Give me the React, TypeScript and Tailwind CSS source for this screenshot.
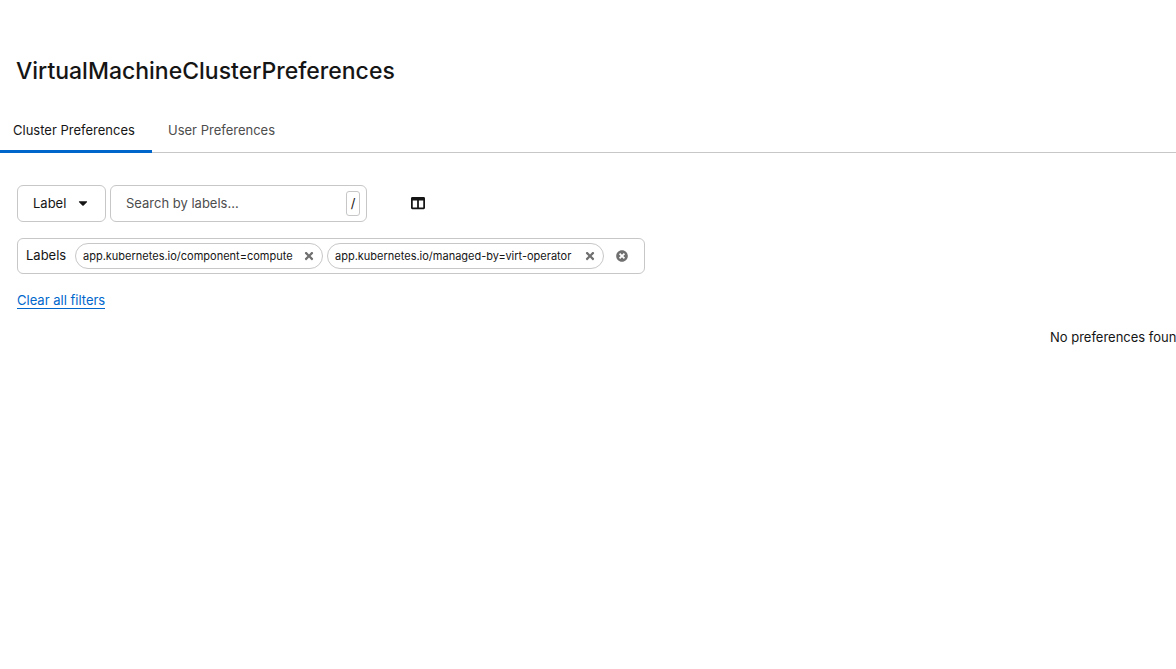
import { useState } from "react";
import { FaCaretDown, FaColumns, FaTimes, FaTimesCircle } from "react-icons/fa";

const tabs = [
  { name: "Cluster Preferences", className: "w-[152px] pl-[13px]" },
  { name: "User Preferences", className: "pl-4 pr-4" },
];

const initialLabels = [
  { text: "app.kubernetes.io/component=compute", className: "w-[248px]" },
  { text: "app.kubernetes.io/managed-by=virt-operator", className: "w-[277px]" },
];

export default function App() {
  const [activeTab, setActiveTab] = useState("Cluster Preferences");
  const [keyword, setKeyword] = useState("");
  const [labels, setLabels] = useState(initialLabels);

  const clearLabels = () => setLabels([]);

  return (
    <main className="min-h-screen overflow-x-hidden bg-white pt-[55px] font-['Inter',sans-serif] text-[13px] text-[#151515]">
      <h1 className="px-4 text-[23px] leading-8 font-medium">
        VirtualMachineClusterPreferences
      </h1>

      <div role="tablist" className="mt-[21px] flex h-[45px] border-b border-[#c7c7c7]">
        {tabs.map((tab) => (
          <button
            key={tab.name}
            role="tab"
            aria-selected={activeTab === tab.name}
            onClick={() => setActiveTab(tab.name)}
            className={`-mb-px border-b-3 pt-1 text-left whitespace-nowrap ${tab.className} ${
              activeTab === tab.name ? "border-[#0066cc]" : "border-transparent text-[#4d4d4d]"
            }`}
          >
            {tab.name}
          </button>
        ))}
      </div>

      {/* Toolbar */}
      <div className="flex items-center px-[17px] pt-8">
        <button className="flex h-[37px] w-[89px] items-center justify-between rounded-md border border-[#c7c7c7] px-[15px] pb-px leading-5">
          Label
          <FaCaretDown className="size-[14px]" />
        </button>
        <div className="ml-1 flex h-[37px] w-[257px] items-center rounded-md border border-[#c7c7c7] pr-1.5 pl-[15px]">
          <input
            type="text"
            aria-label="Search by labels"
            value={keyword}
            onChange={(e) => setKeyword(e.target.value)}
            placeholder="Search by labels..."
            className="min-w-0 flex-1 outline-none placeholder:text-[#4d4d4d]"
          />
          <kbd className="flex h-[25px] w-[14px] items-center justify-center rounded-[3px] border border-[#c7c7c7] font-['Inter',sans-serif] text-[13px]">
            /
          </kbd>
        </div>
        <button aria-label="Manage columns" className="ml-11 pb-px">
          <FaColumns className="size-[14px]" />
        </button>
      </div>

      {/* Applied filters */}
      {labels.length > 0 && (
        <div className="px-[17px] pt-4">
          <div className="flex h-9 w-fit items-center rounded-md border border-[#c7c7c7] pr-4 pl-2">
            <span className="w-[49px]">Labels</span>
            <ul className="flex gap-1">
              {labels.map((label) => (
                <li
                  key={label.text}
                  className={`flex h-[26px] items-center justify-between rounded-full border border-[#c7c7c7] px-[7px] text-[11px] whitespace-nowrap ${label.className}`}
                >
                  {label.text}
                  <button
                    aria-label={`Remove ${label.text}`}
                    onClick={() => setLabels(labels.filter((l) => l !== label))}
                  >
                    <FaTimes className="size-3 text-[#707070]" />
                  </button>
                </li>
              ))}
            </ul>
            <button aria-label="Remove all labels" onClick={clearLabels} className="ml-3">
              <FaTimesCircle className="size-3 text-[#707070]" />
            </button>
          </div>
        </div>
      )}

      <div className="flex px-[17px] pt-[18px]">
        <button onClick={clearLabels} className="border-b border-[#0066cc] leading-4 text-[#0066cc]">
          Clear all filters
        </button>
      </div>

      {/* The table area is wider than the window */}
      <div className="w-[190%] pt-[18px] text-center leading-5">No preferences found</div>
    </main>
  );
}
